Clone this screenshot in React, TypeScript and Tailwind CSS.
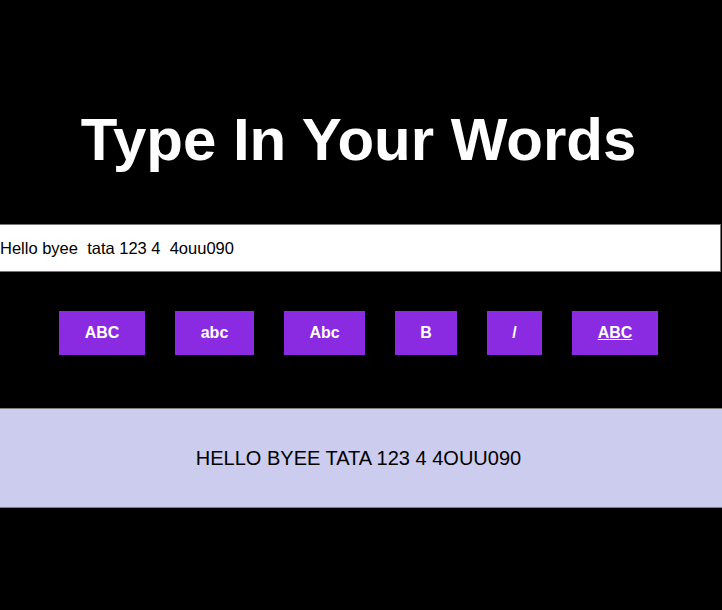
import React, { useState } from "react";

export default function App() {
  const [text, setText] = useState("Hello byee  tata 123 4  4ouu090");
  const buttons: { label: string; w: string; u?: boolean }[] = [
    { label: "ABC", w: "w-[86px]" },
    { label: "abc", w: "w-[79px]" },
    { label: "Abc", w: "w-[81px]" },
    { label: "B", w: "w-[62px]" },
    { label: "/", w: "w-[55px]" },
    { label: "ABC", w: "w-[86px]", u: true },
  ];
  return (
    <div
      className="w-full h-[610px] bg-black overflow-hidden"
      style={{ fontFamily: '"Liberation Sans", Arial, sans-serif' }}
    >
      <div className="pt-[105px] pb-[50px] pr-[5px]">
        <h1 className="text-center text-white font-bold text-[60px] leading-[69px]">
          Type In Your Words
        </h1>
      </div>
      <input
        value={text}
        onChange={(e) => setText(e.target.value)}
        className="block w-[721px] h-[48px] bg-white border-y border-r border-[#767676] px-0 text-[16.5px] text-black outline-none"
      />
      <div className="mt-[39px] flex justify-center gap-[30px] pr-[5px]">
        {buttons.map((b, i) => (
          <button
            key={i}
            className={`${b.w} h-[44px] px-0 bg-[#8a2be2] text-white font-bold text-[16px] ${
              b.u ? "underline" : ""
            }`}
          >
            {b.label}
          </button>
        ))}
      </div>
      <div className="mt-[53px] h-[100px] border-y border-[#808080] bg-[#ccccee] flex items-center justify-center pr-[5px] text-[20px] text-black">
        {text.toUpperCase().replace(/\s+/g, " ")}
      </div>
    </div>
  );
}
